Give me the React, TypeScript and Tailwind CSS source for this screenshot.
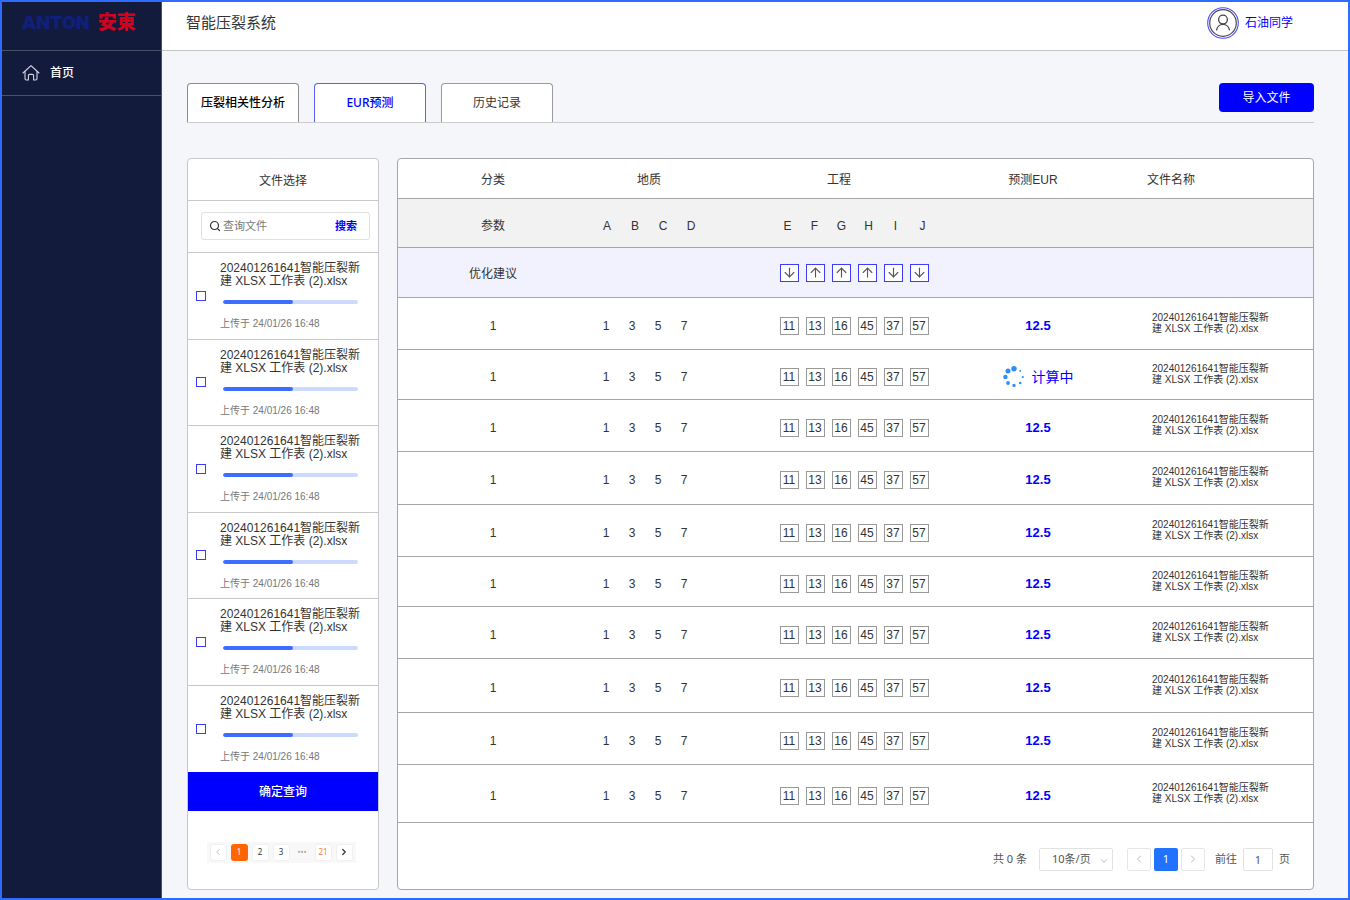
import React from "react";
import { ArrowDown, ArrowUp, ChevronDown, ChevronLeft, ChevronRight, Search } from "lucide-react";

const FILE_NAME = "202401261641智能压裂新建 XLSX 工作表 (2).xlsx";

const tabs = [
  { label: "压裂相关性分析", style: "border-[#8c8c8c] text-black font-medium" },
  { label: "EUR预测", style: "border-[#5c5cff] text-[#0000ff] font-medium" },
  { label: "历史记录", style: "border-[#9a9a9a] text-[#333]" },
];

const files = [1, 2, 3, 4, 5, 6].map((id) => ({ id, name: FILE_NAME, progress: 52, uploaded: "24/01/26 16:48" }));

const geologyParams = ["A", "B", "C", "D"];
const engineeringParams = ["E", "F", "G", "H", "I", "J"];
const advice = ["down", "up", "up", "up", "down", "down"];

const geology = [1, 3, 5, 7];
const engineering = [11, 13, 16, 45, 37, 57];

const rows = [
  { id: 1, height: "h-[52px]", eur: "12.5" },
  { id: 2, height: "h-[50px]", eur: null },
  { id: 3, height: "h-[52px]", eur: "12.5" },
  { id: 4, height: "h-[53px]", eur: "12.5" },
  { id: 5, height: "h-[52px]", eur: "12.5" },
  { id: 6, height: "h-[50px]", eur: "12.5" },
  { id: 7, height: "h-[52px]", eur: "12.5" },
  { id: 8, height: "h-[54px]", eur: "12.5" },
  { id: 9, height: "h-[52px]", eur: "12.5" },
  { id: 10, height: "h-[58px]", eur: "12.5" },
];

function HomeIcon() {
  return (
    <svg width="18" height="18" viewBox="0 0 18 18" fill="none" stroke="#d5d8e2" strokeWidth="1.1" strokeLinecap="round" strokeLinejoin="round">
      <path d="M1 9 L9 1.6 L17 9" />
      <path d="M3 7.6 V14.6 Q3 16 4.4 16 H6.4 V11.6 Q6.4 10.4 7.6 10.4 H10.4 Q11.6 10.4 11.6 11.6 V16 H13.6 Q15 16 15 14.6 V7.6" />
    </svg>
  );
}

function Avatar() {
  return (
    <svg width="32" height="32" viewBox="0 0 32 32" fill="none">
      <circle cx="16" cy="16" r="15.3" stroke="#4a4aff" strokeWidth="1.1" />
      <circle cx="16" cy="16" r="13.3" stroke="#4a4a4a" strokeWidth="1.2" />
      <circle cx="16" cy="12.6" r="4.4" stroke="#444" strokeWidth="1.3" />
      <path d="M9.6 22.8 A6.5 6.5 0 0 1 22.4 22.8" stroke="#444" strokeWidth="1.3" strokeLinecap="round" />
    </svg>
  );
}

function Spinner() {
  return (
    <svg width="22" height="22" viewBox="0 0 22 22" fill="#2f8dff">
      <circle cx="11" cy="2.8" r="2.7" />
      <circle cx="5" cy="5" r="2.5" />
      <circle cx="2.4" cy="11" r="2.2" />
      <circle cx="5" cy="17" r="1.9" />
      <circle cx="11" cy="19.4" r="1.7" />
      <circle cx="17.2" cy="17" r="1.3" />
      <circle cx="19.8" cy="11" r="1.1" />
      <circle cx="17.2" cy="5" r="0.9" />
    </svg>
  );
}

function Sidebar() {
  return (
    <aside className="w-40 shrink-0 bg-[#121b3b] border-r border-[#4a5068]">
      <div className="flex h-[49px] items-center gap-2 border-b border-[#4a5068] pl-5 pb-1.5">
        <span className="font-['Inter'] text-[18px] leading-5 font-black text-[#101f7c]">ANTON</span>
        <span className="text-[19px] leading-5 font-black text-[#d0021f]">安東</span>
      </div>
      <nav className="border-b border-[#4a5068]">
        <a href="#" className="flex h-11 items-center gap-2.5 pl-5 text-xs font-medium text-white">
          <HomeIcon />
          首页
        </a>
      </nav>
    </aside>
  );
}

function FilePanel() {
  return (
    <section className="flex w-48 shrink-0 flex-col rounded-[4px] border border-[#c8c8c8] bg-white">
      <h2 className="flex h-[42px] items-center justify-center border-b border-[#c8c8c8] pt-0.5 text-xs text-[#333]">文件选择</h2>
      <div className="border-b border-[#c8c8c8] px-2 pt-[11px] pb-3 pl-[13px]">
        <div className="flex h-7 items-center rounded-[3px] border border-[#e0e0e0] pr-3 pl-[7px]">
          <Search className="h-3 w-3 shrink-0 text-[#333]" strokeWidth={2.4} />
          <input
            type="text"
            aria-label="查询文件"
            placeholder="查询文件"
            className="ml-0.5 w-0 flex-1 text-[11px] outline-none placeholder:text-[#777]"
          />
          <button type="button" className="text-[11px] font-bold text-[#0000ff]">搜索</button>
        </div>
      </div>
      <ul className="grid min-h-[519px] grid-rows-6">
        {files.map((file) => (
          <li key={file.id} className="flex border-b border-[#c8c8c8] pr-3 pl-2 last:border-b-0">
            <input
              type="checkbox"
              id={`file-${file.id}`}
              className="mr-3.5 h-2.5 w-2.5 shrink-0 appearance-none self-center border border-[#3c3cff] bg-white checked:bg-[#0000ff]"
            />
            <div className="min-w-0 flex-1 pt-[9px]">
              <label htmlFor={`file-${file.id}`} className="block text-xs leading-[13px] text-[#333]">{file.name}</label>
              <div className="mt-3 mr-2 ml-[3px] h-1 overflow-hidden rounded-full bg-[#ccdaff]">
                <div className="h-full rounded-full bg-[#3d6dff]" style={{ width: `${file.progress}%` }} />
              </div>
              <p className="mt-3 text-[10px] leading-4 text-[#777]">上传于 {file.uploaded}</p>
            </div>
          </li>
        ))}
      </ul>
      <button type="button" className="h-[39px] bg-[#0000ff] text-xs font-medium text-white">确定查询</button>
      <div className="flex flex-1 items-center justify-center pt-1 pr-1">
        <div className="flex gap-1 bg-[#f8f8f8] p-[2px] px-[3px] font-['Noto_Sans','Noto_Sans_CJK_SC',sans-serif] text-[8px] text-[#333]">
          <button type="button" aria-label="上一页" className="flex h-[17px] w-[17px] items-center justify-center rounded-[3px] border border-[#f0f0f0] bg-white text-[#bbb]">
            <ChevronLeft className="h-2.5 w-2.5" />
          </button>
          <button type="button" className="h-[17px] w-[17px] rounded-[3px] bg-[#ff6600] text-white">1</button>
          <button type="button" className="h-[17px] w-[17px] rounded-[3px] border border-[#f0f0f0] bg-white">2</button>
          <button type="button" className="h-[17px] w-[17px] rounded-[3px] border border-[#f0f0f0] bg-white">3</button>
          <span className="w-[17px] text-center leading-4 text-[#aaa]">•••</span>
          <button type="button" className="h-[17px] w-[17px] rounded-[3px] border border-[#f0f0f0] bg-white text-[#ff7a3d]">21</button>
          <button type="button" aria-label="下一页" className="flex h-[17px] w-[17px] items-center justify-center rounded-[3px] border border-[#f0f0f0] bg-white">
            <ChevronRight className="h-2.5 w-2.5" strokeWidth={3} />
          </button>
        </div>
      </div>
    </section>
  );
}

function ResultTable() {
  return (
    <table className="w-full table-fixed border-separate border-spacing-0 text-center text-xs text-[#333] [&_td]:border-b [&_td]:border-[#a6a6a6] [&_th]:border-b [&_th]:border-[#a6a6a6] [&_th]:font-normal">
      <colgroup>
        <col className="w-[190px]" />
        <col className="w-[122px]" />
        <col className="w-[258px]" />
        <col className="w-[130px]" />
        <col className="w-[215px]" />
      </colgroup>
      <thead>
        <tr className="h-10">
          <th className="pt-0.5">分类</th>
          <th className="pt-0.5">地质</th>
          <th className="pt-0.5">工程</th>
          <th className="pt-0.5">预测EUR</th>
          <th className="pt-0.5 pl-[49px] text-left">文件名称</th>
        </tr>
      </thead>
      <tbody>
        <tr className="h-[49px] bg-[#f2f2f2]">
          <td className="pt-1.5">参数</td>
          <td className="pt-1.5">
            <div className="flex justify-center">
              {geologyParams.map((name) => <span key={name} className="w-7">{name}</span>)}
            </div>
          </td>
          <td className="pt-1.5 pl-8">
            <div className="flex justify-center">
              {engineeringParams.map((name) => <span key={name} className="w-[27px]">{name}</span>)}
            </div>
          </td>
          <td />
          <td />
        </tr>
        <tr className="h-[50px] bg-[#f2f2ff]">
          <td className="pt-0.5">优化建议</td>
          <td />
          <td className="pl-[30px]">
            <div className="flex justify-center gap-[7px]">
              {advice.map((direction, i) => (
                <span key={i} className="flex h-[18px] w-[19px] items-center justify-center border border-[#3c3cff] bg-white text-[#555]">
                  {direction === "up" ? <ArrowUp size={15} strokeWidth={1.8} /> : <ArrowDown size={15} strokeWidth={1.8} />}
                </span>
              ))}
            </div>
          </td>
          <td />
          <td />
        </tr>
        {rows.map((row) => (
          <tr key={row.id} className={row.height}>
            <td className="pt-1">1</td>
            <td className="pt-1 pr-2">
              <div className="flex justify-center">
                {geology.map((value) => <span key={value} className="w-[26px]">{value}</span>)}
              </div>
            </td>
            <td className="pt-1 pl-[30px]">
              <div className="flex justify-center gap-[7px]">
                {engineering.map((value, i) => (
                  <input
                    key={value}
                    type="text"
                    aria-label={engineeringParams[i]}
                    defaultValue={value}
                    className="h-[18px] w-[19px] border border-[#999] bg-white text-center outline-none"
                  />
                ))}
              </div>
            </td>
            {row.eur ? (
              <td className="pt-1 pl-2.5 text-[13px] font-bold text-[#0000ff]">{row.eur}</td>
            ) : (
              <td className="pt-1 pl-2.5">
                <div className="flex items-center justify-center gap-[7px] text-sm text-[#0000ff]">
                  <Spinner />
                  计算中
                </div>
              </td>
            )}
            <td className="pb-0.5 pl-[54px] text-left">
              <p className="w-[124px] text-[10px] leading-[11px]">{FILE_NAME}</p>
            </td>
          </tr>
        ))}
      </tbody>
    </table>
  );
}

function TablePagination() {
  return (
    <div className="flex min-h-[66px] items-center justify-end pt-1.5 pr-[23px] font-['Noto_Sans','Noto_Sans_CJK_SC',sans-serif] text-[11px] text-[#555]">
      <span>共 0 条</span>
      <div className="relative ml-3">
        <select aria-label="每页条数" className="h-[23px] w-[74px] appearance-none rounded-[2px] border border-[#e2e2e2] bg-white pl-3 outline-none">
          <option>10条/页</option>
          <option>20条/页</option>
        </select>
        <ChevronDown className="pointer-events-none absolute top-2 right-1 h-2.5 w-2.5 text-[#aaa]" />
      </div>
      <button type="button" aria-label="上一页" className="ml-3.5 flex h-[23px] w-6 items-center justify-center rounded-[2px] border border-[#e6e6e6] bg-white text-[#bbb]">
        <ChevronLeft className="h-3 w-3" />
      </button>
      <button type="button" className="ml-[3px] h-[23px] w-6 rounded-[2px] bg-[#2173ff] text-white">1</button>
      <button type="button" aria-label="下一页" className="ml-[3px] flex h-[23px] w-6 items-center justify-center rounded-[2px] border border-[#e6e6e6] bg-white text-[#bbb]">
        <ChevronRight className="h-3 w-3" />
      </button>
      <label htmlFor="goto-page" className="ml-2.5">前往</label>
      <input id="goto-page" type="text" defaultValue="1" className="mx-1.5 h-[23px] w-[30px] rounded-[2px] border border-[#e2e2e2] bg-white text-center outline-none" />
      <span>页</span>
    </div>
  );
}

export default function App() {
  return (
    <div className="flex min-h-screen border-2 border-[#2f6bff] bg-[#f5f6f9] font-['Liberation_Sans','Noto_Sans_CJK_SC',sans-serif]">
      <Sidebar />
      <div className="flex min-w-0 flex-1 flex-col">
        <header className="flex h-[49px] items-center justify-between border-b border-[#c4c4c6] bg-white pr-[55px] pb-1.5 pl-6">
          <h1 className="text-[15px] text-[#333]">智能压裂系统</h1>
          <a href="#" className="flex items-center gap-1.5 text-xs text-[#0000ff]">
            <Avatar />
            石油同学
          </a>
        </header>
        <main className="flex flex-1 flex-col pt-8 pr-[34px] pb-2 pl-[25px]">
          <div className="flex items-start justify-between border-b border-[#ccc]">
            <div role="tablist" className="flex gap-[15px] font-['Noto_Sans','Noto_Sans_CJK_SC',sans-serif]">
              {tabs.map((tab) => (
                <button
                  key={tab.label}
                  type="button"
                  role="tab"
                  aria-selected={tab.label === "EUR预测"}
                  className={`h-[39px] w-28 rounded-t-[4px] border border-b-0 bg-white text-xs ${tab.style}`}
                >
                  {tab.label}
                </button>
              ))}
            </div>
            <button type="button" className="h-[29px] w-[95px] rounded-[4px] bg-[#0000ff] text-xs text-white">导入文件</button>
          </div>
          <div className="mt-[35px] flex flex-1 gap-[18px]">
            <FilePanel />
            <section className="min-w-0 flex-1 overflow-hidden rounded-[4px] border border-[#a6a6a6] bg-white">
              <ResultTable />
              <TablePagination />
            </section>
          </div>
        </main>
      </div>
    </div>
  );
}
